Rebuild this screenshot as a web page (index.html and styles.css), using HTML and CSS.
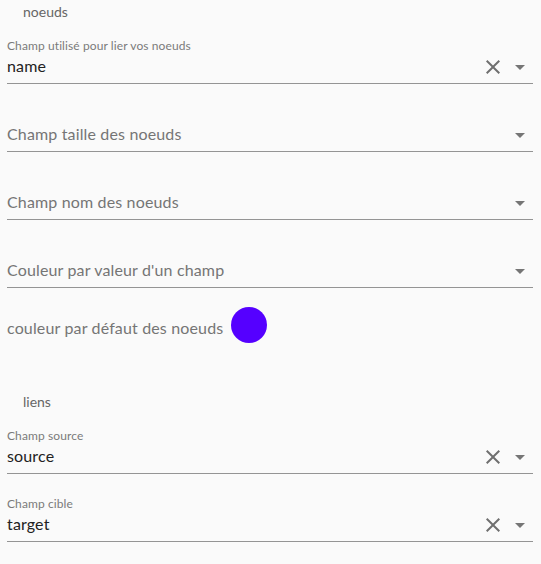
FILE: index.html
```html
<!DOCTYPE html>
<html lang="fr">
<head>
<meta charset="utf-8">
<title>Configuration</title>
<link rel="stylesheet" href="styles.css">
</head>
<body>
<div class="panel">
  <section class="group">
    <div class="group-title">noeuds</div>
    <div class="field">
      <div class="label">Champ utilisé pour lier vos noeuds</div>
      <div class="row">
        <span class="value">name</span>
        <svg class="clear" viewBox="0 0 24 24" width="24" height="24"><path d="M19 6.41L17.59 5 12 10.59 6.41 5 5 6.41 10.59 12 5 17.59 6.41 19 12 13.41 17.59 19 19 17.59 13.41 12z"/></svg>
        <span class="arrow"></span>
      </div>
    </div>
    <div class="field">
      <div class="row">
        <span class="placeholder">Champ taille des noeuds</span>
        <span class="arrow"></span>
      </div>
    </div>
    <div class="field">
      <div class="row">
        <span class="placeholder">Champ nom des noeuds</span>
        <span class="arrow"></span>
      </div>
    </div>
    <div class="field">
      <div class="row">
        <span class="placeholder">Couleur par valeur d'un champ</span>
        <span class="arrow"></span>
      </div>
    </div>
    <div class="color-row">
      <span class="color-label">couleur par défaut des noeuds</span>
      <span class="swatch"></span>
    </div>
  </section>
  <section class="group links">
    <div class="group-title">liens</div>
    <div class="field">
      <div class="label">Champ source</div>
      <div class="row">
        <span class="value">source</span>
        <svg class="clear" viewBox="0 0 24 24" width="24" height="24"><path d="M19 6.41L17.59 5 12 10.59 6.41 5 5 6.41 10.59 12 5 17.59 6.41 19 12 13.41 17.59 19 19 17.59 13.41 12z"/></svg>
        <span class="arrow"></span>
      </div>
    </div>
    <div class="field">
      <div class="label">Champ cible</div>
      <div class="row">
        <span class="value">target</span>
        <svg class="clear" viewBox="0 0 24 24" width="24" height="24"><path d="M19 6.41L17.59 5 12 10.59 6.41 5 5 6.41 10.59 12 5 17.59 6.41 19 12 13.41 17.59 19 19 17.59 13.41 12z"/></svg>
        <span class="arrow"></span>
      </div>
    </div>
  </section>
</div>
</body>
</html>
```

FILE: styles.css
```css
html, body {
  margin: 0;
  padding: 0;
  background: #fafafa;
}
body {
  font-family: Lato, "Noto Sans", sans-serif;
  color: #212121;
}
.panel {
  padding: 0 8px 0 7px;
}
.group-title {
  height: 16px;
  line-height: 24px;
  font-size: 14px;
  color: #666;
  padding-left: 16px;
}
.links {
  margin-top: 47px;
}
.field {
  height: 67px;
  border-bottom: 1px solid #949494;
  display: flex;
  flex-direction: column;
  justify-content: flex-end;
}
.label {
  font-size: 12px;
  line-height: 13px;
  letter-spacing: 0.1px;
  color: #7a7a7a;
  margin-bottom: 5px;
}
.row {
  display: flex;
  align-items: center;
  height: 20px;
  margin-bottom: 6px;
}
.value, .placeholder {
  flex: 1;
  font-size: 16px;
  line-height: 20px;
  letter-spacing: 0.15px;
  padding-bottom: 2px;
}
.value {
  color: #222;
}
.placeholder {
  color: #757575;
}
.clear {
  fill: #6f6f6f;
  flex: none;
}
.arrow {
  flex: none;
  width: 0;
  height: 0;
  border-left: 5px solid transparent;
  border-right: 5px solid transparent;
  border-top: 5px solid #757575;
  margin-left: 10px;
  margin-right: 8px;
}
.color-row {
  display: flex;
  align-items: center;
  padding-top: 19px;
}
.color-label {
  font-size: 16px;
  line-height: 20px;
  letter-spacing: 0.15px;
  padding-top: 6px;
  color: #757575;
}
.swatch {
  width: 36px;
  height: 36px;
  border-radius: 50%;
  background: #5500ff;
  margin-left: 8px;
}
```
